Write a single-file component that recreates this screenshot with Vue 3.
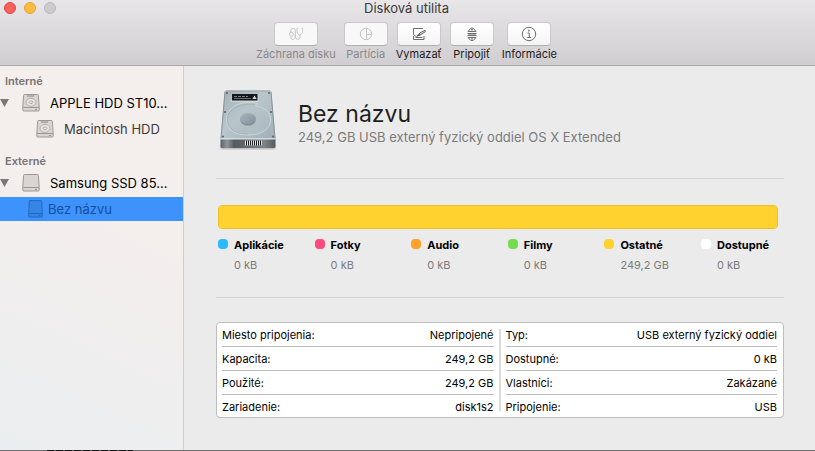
<script setup>
const tools = [
  { id: 'aid', label: 'Záchrana disku', disabled: true },
  { id: 'partition', label: 'Partícia', disabled: true },
  { id: 'erase', label: 'Vymazať' },
  { id: 'mount', label: 'Pripojiť' },
  { id: 'info', label: 'Informácie' },
]

const groups = [
  {
    name: 'Interné',
    disk: 'APPLE HDD ST10...',
    platter: true,
    volumes: [{ name: 'Macintosh HDD' }],
  },
  {
    name: 'Externé',
    disk: 'Samsung SSD 85...',
    platter: false,
    volumes: [{ name: 'Bez názvu', selected: true }],
  },
]

const usage = [
  { label: 'Aplikácie', value: '0 kB', share: 0, color: '#29baff' },
  { label: 'Fotky', value: '0 kB', share: 0, color: '#ff4a80' },
  { label: 'Audio', value: '0 kB', share: 0, color: '#ffa229' },
  { label: 'Filmy', value: '0 kB', share: 0, color: '#74dc4e' },
  { label: 'Ostatné', value: '249,2 GB', share: 100, color: '#ffd22f' },
  { label: 'Dostupné', value: '0 kB', share: 0, color: '#ffffff' },
]

const details = [
  [
    ['Miesto pripojenia:', 'Nepripojené'],
    ['Kapacita:', '249,2 GB'],
    ['Použité:', '249,2 GB'],
    ['Zariadenie:', 'disk1s2'],
  ],
  [
    ['Typ:', 'USB externý fyzický oddiel'],
    ['Dostupné:', '0 kB'],
    ['Vlastníci:', 'Zakázané'],
    ['Pripojenie:', 'USB'],
  ],
]
</script>

<template>
  <div class="window">
    <header class="titlebar">
      <div class="lights">
        <button class="light close" aria-label="Zavrieť"></button>
        <button class="light minimize" aria-label="Minimalizovať"></button>
        <button class="light zoom" aria-label="Zväčšiť" disabled></button>
      </div>
      <h1 class="title">Disková utilita</h1>
      <nav class="toolbar">
        <div v-for="tool in tools" :key="tool.id" class="tool" :class="{ off: tool.disabled }">
          <button :id="`tool-${tool.id}`" class="tool-button" :disabled="tool.disabled" :aria-labelledby="`label-${tool.id}`">
            <svg v-if="tool.id === 'aid'" width="16" height="16" viewBox="0 0 16 16">
              <circle cx="3.400" cy="8.300" r="2" />
              <path d="M2.500 6.300C2.800 3.500 4 2.300 5.300 2.300s2 1 2 2.200v5.700c0 2-1 3.300-2.600 3.300s-2.200-1.300-1.500-2.800M7.300 9.500c0 2.300 1 3.800 2.600 3.800s2.100-1.300 2.100-3V9" />
              <path d="M10 2.300H9c-.3 3.700.6 6.500 2.700 6.500S15 6 14.500 2.300h-1" />
            </svg>
            <svg v-else-if="tool.id === 'partition'" width="16" height="16" viewBox="0 0 16 16">
              <circle cx="8" cy="8" r="5.700" />
              <path d="M8.500 2.300v11.400M8.500 8.500h5.200" />
            </svg>
            <svg v-else-if="tool.id === 'erase'" width="16" height="16" viewBox="0 0 16 16">
              <path d="M12 2.500H2.500v6l2.500 2M2.500 10v3.500h10.500V10M4.500 11.500h7" />
              <path d="M14 4.300 9 6.800 6.500 9.800 9.800 8.600 14.300 5.800z" fill="#d6d6d6" />
              <path class="solid" d="m5.500 10.300 2.700-2.600 1.600 1z" />
            </svg>
            <svg v-else-if="tool.id === 'mount'" width="16" height="16" viewBox="0 0 16 16">
              <path d="M4 5.500 6.800 2.200h2.400L12 5.500zM4 11.500l2.800 3h2.400l2.800-3z" />
              <path d="M3.500 7.500h9M3.500 9.500h9" />
              <path d="M4 8.500h8" opacity=".5" />
              <path class="solid" d="M7.500 4h1v-.5h-1zM7.500 12.800h1v.3h-1z" />
            </svg>
            <svg v-else width="16" height="16" viewBox="0 0 16 16">
              <circle cx="8" cy="8" r="6.700" />
              <circle class="solid" cx="7.900" cy="4.700" r=".5" />
              <path d="M6.500 7H8.300v4.500M6.300 11.500h3.900" />
            </svg>
          </button>
          <label :id="`label-${tool.id}`" class="tool-label" :for="`tool-${tool.id}`">{{ tool.label }}</label>
        </div>
      </nav>
    </header>

    <div class="body">
      <aside class="sidebar">
        <section v-for="group in groups" :key="group.name" class="group">
          <h2 class="group-name">{{ group.name }}</h2>
          <div class="row disk">
            <button class="disclosure" :aria-label="`Zbaliť ${group.disk}`">
              <svg width="9" height="8" viewBox="0 0 9 8"><path d="M0 0h9L4.500 8z" fill="#7b7877" /></svg>
            </button>
            <button class="entry">
              <svg class="drive" width="18" height="18" viewBox="0 0 18 18">
                <path d="M2.500.5h13q.8 0 .9 1l.8 12v2.500q0 1-1 1H1.800q-1 0-1-1v-2.500l.8-12q.1-1 .9-1z" />
                <path d="M1 13.500h16" />
                <path d="M13 15.500h2" />
                <g v-if="group.platter" class="inner">
                  <path d="M5 2h7" class="mark" />
                  <ellipse cx="9" cy="8.300" rx="5" ry="4" />
                  <ellipse cx="9" cy="8.300" rx="2" ry="1.300" />
                </g>
              </svg>
              <span>{{ group.disk }}</span>
            </button>
          </div>
          <div v-for="volume in group.volumes" :key="volume.name" class="row volume" :class="{ selected: volume.selected }">
            <button class="entry" :aria-pressed="!!volume.selected">
              <svg class="drive" :width="volume.selected ? 15 : 18" height="18" viewBox="0 0 18 18" preserveAspectRatio="none">
                <path d="M2.500.5h13q.8 0 .9 1l.8 12v2.500q0 1-1 1H1.800q-1 0-1-1v-2.500l.8-12q.1-1 .9-1z" />
                <path d="M1 13.500h16" />
                <path d="M13 15.500h2" />
                <g v-if="group.platter" class="inner">
                  <path d="M5 2h7" class="mark" />
                  <ellipse cx="9" cy="8.300" rx="5" ry="4" />
                  <ellipse cx="9" cy="8.300" rx="2" ry="1.300" />
                </g>
              </svg>
              <span>{{ volume.name }}</span>
            </button>
          </div>
        </section>
      </aside>

      <main class="content">
        <div class="summary">
          <svg class="hero" width="62" height="64" viewBox="-1 -1 62 64" aria-hidden="true">
            <defs>
              <linearGradient id="lid" x1="0" y1="0" x2="1" y2="1">
                <stop offset="0" stop-color="#a3b0b6" />
                <stop offset=".45" stop-color="#b9c7cd" />
                <stop offset="1" stop-color="#a0afb5" />
              </linearGradient>
              <linearGradient id="front" x1="0" y1="0" x2="1" y2="0">
                <stop offset="0" stop-color="#58636a" />
                <stop offset=".12" stop-color="#8b969b" />
                <stop offset=".25" stop-color="#55595b" />
                <stop offset=".8" stop-color="#7c8488" />
                <stop offset="1" stop-color="#535b60" />
              </linearGradient>
              <linearGradient id="hub" x1="0" y1="0" x2="1" y2="1">
                <stop offset="0" stop-color="#a9b6bc" />
                <stop offset="1" stop-color="#82919a" />
              </linearGradient>
              <filter id="soft" x="-20%" y="-20%" width="140%" height="140%">
                <feGaussianBlur stdDeviation="1" />
              </filter>
            </defs>
            <path d="M4 55h54v5H4z" fill="#777" opacity=".55" filter="url(#soft)" />
            <path d="M3.500 50h55v7.500q0 1.500-1.500 1.500H5q-1.500 0-1.500-1.500z" fill="url(#front)" />
            <path d="M7.500 3q.2-1.500 1.700-1.500h43.600q1.500 0 1.700 1.500l4 46.500h-55z" fill="url(#lid)" />
            <path d="M8 3 4 49.500M54 3l4 46.500" stroke="#87959b" />
            <path d="M9 2h44" stroke="#97a4aa" />
            <path d="M3.500 50h55" stroke="#d9e2e5" />
            <path d="M39.500 14C23.500 11 9.500 18 9.500 31c0 10 9 15 22 15s22-6 22-15c0-8-6-13-15-14l1-3z" fill="#b4c2c8" fill-opacity=".4" stroke="#ccd7dc" />
            <path d="M38.500 15.500C24.500 14 10.500 19 10.500 31c0 9 9 14 20 14" fill="none" stroke="#9dabb1" stroke-width=".7" />
            <ellipse cx="31" cy="31" rx="7.700" ry="5.500" fill="#7e8c94" />
            <ellipse cx="31" cy="29.500" rx="7.700" ry="5.500" fill="url(#hub)" />
            <path d="M13.500 11h1V5h27v8h-28z" fill="#d3dce0" opacity=".7" />
            <path d="M15 5h25.500v6.500H15z" fill="#151718" />
            <path d="M17 7.500h14" stroke="#777d80" stroke-dasharray="3 1" />
            <path d="M17 9.500h17" stroke="#686e70" />
            <path d="m37.500 6.500 2.200 3.500h-4.400z" fill="#d5d8d9" />
            <g fill="#546169">
              <circle cx="10" cy="4" r="1" /><circle cx="52" cy="4" r="1" />
              <circle cx="8" cy="23" r="1" /><circle cx="54" cy="23" r="1" />
              <circle cx="6" cy="47.500" r="1" /><circle cx="56" cy="47.500" r="1" />
            </g>
            <path d="M28 51.500h17v5H28z" fill="#dfe4e4" />
            <path d="M29.500 51.500v5M31.500 51.500v5M33.500 51.500v5M35.500 51.500v5M37.500 51.500v5M39.500 51.500v5M41.500 51.500v5M43.500 51.500v5" stroke="#1b1d1e" />
          </svg>
          <div>
            <h2 class="name">Bez názvu</h2>
            <p class="kind">249,2 GB USB externý fyzický oddiel OS X Extended</p>
          </div>
        </div>

        <section class="usage">
          <div class="bar">
            <div v-for="item in usage" :key="item.label" class="segment" :style="{ width: item.share + '%', background: item.color }"></div>
          </div>
          <dl class="legend">
            <div v-for="item in usage" :key="item.label" class="legend-item">
              <span class="dot" :style="{ background: item.color }"></span>
              <dt>{{ item.label }}</dt>
              <dd>{{ item.value }}</dd>
            </div>
          </dl>
        </section>

        <section class="details">
          <table v-for="(column, i) in details" :key="i">
            <tbody>
              <tr v-for="[label, value] in column" :key="label">
                <th scope="row">{{ label }}</th>
                <td>{{ value }}</td>
              </tr>
            </tbody>
          </table>
        </section>
      </main>
    </div>
    <div class="desktop"></div>
  </div>
</template>

<style>
body {
  margin: 0;
  background: #6d6d6d;
}
</style>

<style scoped>
.window {
  display: flex;
  flex-direction: column;
  min-height: 100vh;
  background: #ebebeb;
  color: #000;
  font-family: Inter, "Liberation Sans", sans-serif;
  font-size: 13px;
}
/* Sliver of the desktop, with an icon's caption, below the window edge */
.desktop {
  height: 1px;
  background:
    repeating-linear-gradient(90deg, #141414 0 7px, #5c5c5c 7px 9px) 47px 0 / 86px 1px no-repeat,
    #6d6d6d;
}
button {
  margin: 0;
  padding: 0;
  border: 0;
  background: none;
  color: inherit;
  font: inherit;
}
h1, h2, p, dl, dd {
  margin: 0;
  font-weight: 400;
}
.titlebar {
  position: relative;
  height: 65px;
  padding-right: 2px;
  border-bottom: 1px solid #a9a7a9;
  background: linear-gradient(#e8e6e8, #d0ced0);
}
.lights {
  position: absolute;
  top: 2px;
  left: 4px;
  display: flex;
  gap: 8px;
}
.light {
  box-sizing: border-box;
  width: 12px;
  height: 12px;
  border: 1px solid;
  border-radius: 50%;
}
.close { border-color: #e2463f; background: #fc605c; }
.minimize { border-color: #e0a033; background: #fdbc40; }
.zoom { border-color: #b8b7b8; background: #cdcccd; }
.title {
  color: #3c3a3c;
  font-size: 13px;
  line-height: 16px;
  text-align: center;
}
.toolbar {
  display: flex;
  justify-content: center;
  gap: 8px;
  padding-top: 6px;
}
.tool {
  display: flex;
  flex-direction: column;
  align-items: center;
  gap: 1px;
  color: #1d1b1d;
}
.tool-button {
  display: flex;
  align-items: center;
  justify-content: center;
  box-sizing: border-box;
  width: 44px;
  height: 24px;
  border: 1px solid #c9c7c9;
  border-bottom-color: #b0aeb0;
  border-radius: 4px;
  background: linear-gradient(#fff, #f4f4f4);
}
.tool-button svg {
  fill: none;
  stroke: #6c6c6c;
}
.tool-button .solid {
  fill: #6c6c6c;
}
.off {
  color: #8a888a;
}
.off .tool-button {
  background: #f8f8f8;
}
.off .tool-button svg {
  stroke: #c4c4c4;
}
.tool-label {
  font-size: 11px;
  line-height: 14px;
}
.body {
  display: flex;
  flex: 1;
}
.sidebar {
  display: flex;
  flex: 0 0 183px;
  flex-direction: column;
  gap: 10px;
  padding-top: 5px;
  border-right: 1px solid #d0cdce;
  background: linear-gradient(25deg, #ebeef0, #f0eeee 35%, #f4eeed 60%);
}
.group {
  display: flex;
  flex-direction: column;
}
.group-name {
  padding-left: 5px;
  color: #777372;
  font-size: 11px;
  font-weight: 600;
  line-height: 20px;
}
.row {
  display: flex;
  align-items: center;
  height: 24px;
}
.row + .row {
  margin-top: 2px;
}
.disclosure {
  display: flex;
  width: 22px;
}
.entry {
  display: flex;
  flex: 1;
  align-items: center;
  gap: 10px;
  white-space: nowrap;
}
.volume .entry {
  padding-left: 36px;
  color: #3f3c3b;
}
.volume.selected {
  background: #3d93fb;
}
.volume.selected .entry {
  gap: 5px;
  padding-left: 28px;
  color: #154f9b;
}
.drive {
  fill: #dad5d3;
  stroke: #9c9795;
}
.inner {
  fill: #e8e4e2;
  stroke: #b3aeac;
}
.inner .mark {
  stroke: #8a8583;
}
.selected .drive {
  fill: #3585e6;
  stroke: #2166bb;
}
.content {
  flex: 1;
  padding: 22px 31px 32px 32px;
}
.summary {
  display: flex;
  gap: 20px;
  height: 90px;
  border-bottom: 1px solid #d3d3d3;
}
.name {
  padding-top: 11px;
  font-size: 23px;
  line-height: 30px;
  color: #1f1f1f;
}
.kind {
  color: #7b7b7b;
  font-size: 13px;
  line-height: 16px;
}
.usage {
  padding: 26px 6px 24px 2px;
  border-bottom: 1px solid #d3d3d3;
}
.bar {
  display: flex;
  box-sizing: border-box;
  height: 24px;
  overflow: hidden;
  border: 1px solid #edbf27;
  border-radius: 4px;
}
.legend {
  display: grid;
  grid-template-columns: repeat(5, 1fr) 77px;
  padding-top: 8px;
  font-size: 11px;
  line-height: 16px;
}
.legend-item {
  display: grid;
  grid-template-columns: 10px 1fr;
  column-gap: 6px;
  row-gap: 4px;
  white-space: nowrap;
}
.dot {
  width: 10px;
  height: 10px;
  margin-top: 2px;
  border-radius: 4px;
}
.legend dt {
  font-weight: 700;
}
.legend dd {
  grid-column: 2;
  color: #7b7b7b;
}
.details {
  display: flex;
  gap: 12px;
  margin-top: 24px;
  padding: 0 6px 0 5px;
  border: 1px solid #bdbdbd;
  border-radius: 4px;
  background: linear-gradient(#dcdcdc, #dcdcdc) center / 2px 82px no-repeat #fff;
}
table {
  flex: 1 1 0;
  border-collapse: separate;
  border-spacing: 0;
  font-size: 11px;
  line-height: 14px;
}
th, td {
  height: 23px;
  padding: 0;
  border-bottom: 1px solid #bdbdbd;
  font-weight: 400;
  text-align: left;
}
td {
  text-align: right;
}
tr:last-child > * {
  height: 21px;
  padding-top: 1px;
  border-bottom: 0;
}
</style>
